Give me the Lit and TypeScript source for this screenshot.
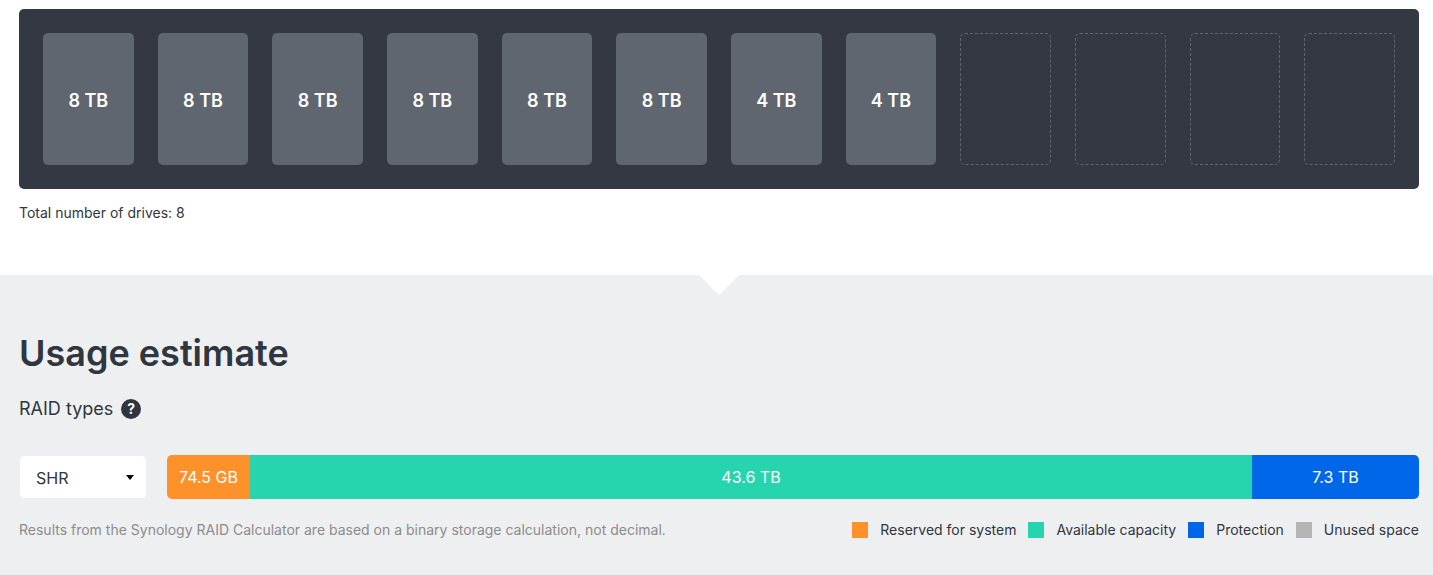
import { LitElement, html, css } from "lit";
import { customElement, state } from "lit/decorators.js";
import { classMap } from "lit/directives/class-map.js";
import { styleMap } from "lit/directives/style-map.js";

interface Segment {
  kind: string;
  label: string;
  share: number;
}

@customElement("drive-bay")
class DriveBay extends LitElement {
  static properties = { drives: { attribute: false }, slots: { type: Number } };

  declare drives: string[];
  declare slots: number;

  static styles = css`
    :host {
      display: block;
    }
    .bay {
      display: grid;
      grid-template-columns: repeat(12, minmax(0, 1fr));
      gap: 24px;
      margin: 0;
      padding: 24px;
      list-style: none;
      background: #343843;
      border-radius: 5px;
    }
    .slot {
      height: 132px;
      box-sizing: border-box;
      display: flex;
      align-items: center;
      justify-content: center;
      border-radius: 5px;
      color: #fff;
      font-size: 18px;
      line-height: 28px;
      font-weight: 600;
      border: 1px dashed #60666f;
    }
    .filled {
      border: 0;
      background: #60666f;
      padding-top: 4px;
    }
  `;

  render() {
    return html`<ul class="bay">
      ${Array.from({ length: this.slots }, (_, i) => this.drives[i]).map(
        (drive) =>
          html`<li class=${classMap({ slot: true, filled: !!drive })}>${drive ?? ""}</li>`
      )}
    </ul>`;
  }
}

@customElement("app-root")
class AppRoot extends LitElement {
  @state() private drives = ["8 TB", "8 TB", "8 TB", "8 TB", "8 TB", "8 TB", "4 TB", "4 TB"];

  @state() private segments: Segment[] = [
    { kind: "system", label: "74.5 GB", share: 83 },
    { kind: "available", label: "43.6 TB", share: 1002 },
    { kind: "protection", label: "7.3 TB", share: 167 },
  ];

  private legend = [
    { kind: "system", label: "Reserved for system" },
    { kind: "available", label: "Available capacity" },
    { kind: "protection", label: "Protection" },
    { kind: "unused", label: "Unused space" },
  ];

  static styles = css`
    :host {
      display: flex;
      flex-direction: column;
      min-height: 100vh;
      background: #fff;
      color: #2f3640;
      font-family: Inter, "Liberation Sans", sans-serif;
      font-size: 14px;
      line-height: 24px;
    }
    .drives {
      padding: 9px 14px 50px 19px;
    }
    .total {
      margin: 12px 0 0;
      line-height: 24px;
    }
    .usage {
      flex: 1;
      padding: 0 14px 32px 19px;
      background: #eeeff1;
    }
    .notch {
      display: block;
      width: 40px;
      height: 20px;
      margin: 0 auto;
      fill: #fff;
    }
    .title {
      margin: 32px 0 0;
      font-size: 36px;
      line-height: 52px;
      font-weight: 600;
    }
    .types {
      display: flex;
      align-items: center;
      gap: 8px;
      margin-top: 16px;
      font-size: 18px;
      line-height: 28px;
    }
    .help {
      display: block;
      width: 20px;
      height: 20px;
      padding: 0;
      border: 0;
      border-radius: 50%;
      background: #2f3640;
      color: #fff;
      font: 700 14px/20px Inter, sans-serif;
      text-align: center;
    }
    .estimate {
      display: flex;
      align-items: center;
      gap: 20px;
      margin-top: 32px;
    }
    .picker {
      display: grid;
      align-items: center;
      flex: none;
      width: 128px;
    }
    .select {
      grid-area: 1 / 1;
      appearance: none;
      box-sizing: border-box;
      width: 100%;
      height: 44px;
      margin: 0;
      padding: 2px 32px 0 16px;
      border: 1px solid #eeeff1;
      border-radius: 5px;
      background: #fff;
      color: inherit;
      font: 16px/24px Inter, sans-serif;
    }
    .caret {
      grid-area: 1 / 1;
      justify-self: end;
      width: 8px;
      height: 5px;
      margin-right: 13px;
      pointer-events: none;
    }
    .bar {
      display: flex;
      flex: 1;
      min-width: 0;
      overflow: hidden;
      border-radius: 5px;
      color: #fff;
      font-size: 16px;
      line-height: 44px;
      text-align: center;
    }
    .segment {
      flex-basis: 0;
      min-width: 0;
      white-space: nowrap;
    }
    .system {
      background: #ff912b;
    }
    .available {
      background: #26d5ad;
    }
    .protection {
      background: #0068e8;
    }
    .unused {
      background: #b4b4b4;
    }
    .foot {
      display: flex;
      flex-wrap: wrap;
      justify-content: space-between;
      gap: 8px 24px;
      margin-top: 19px;
    }
    .note {
      margin: 0;
      color: #8c8c8c;
    }
    .legend {
      display: flex;
      flex-wrap: wrap;
      gap: 12px;
      margin: 0;
      padding: 0;
      list-style: none;
    }
    .entry {
      display: flex;
      align-items: center;
      gap: 12px;
    }
    .swatch {
      width: 16px;
      height: 16px;
    }
  `;

  render() {
    return html`
      <section class="drives">
        <drive-bay .drives=${this.drives} .slots=${12}></drive-bay>
        <p class="total">Total number of drives: ${this.drives.length}</p>
      </section>
      <section class="usage">
        <svg class="notch" viewBox="0 0 40 20" aria-hidden="true"><path d="M0 0H40L20 20Z" /></svg>
        <h2 class="title">Usage estimate</h2>
        <div class="types">
          <label for="raid">RAID types</label>
          <button class="help" type="button">?</button>
        </div>
        <div class="estimate">
          <div class="picker">
            <select class="select" id="raid">
              <option selected>SHR</option>
            </select>
            <svg class="caret" viewBox="0 0 8 5" aria-hidden="true"><path d="M0 0H8L4 5Z" /></svg>
          </div>
          <div class="bar">
            ${this.segments.map(
              (s) => html`<div
                class=${classMap({ segment: true, [s.kind]: true })}
                style=${styleMap({ flexGrow: String(s.share) })}
              >${s.label}</div>`
            )}
          </div>
        </div>
        <div class="foot">
          <p class="note">
            Results from the Synology RAID Calculator are based on a binary storage calculation, not decimal.
          </p>
          <ul class="legend">
            ${this.legend.map(
              (l) => html`<li class="entry">
                <span class=${classMap({ swatch: true, [l.kind]: true })}></span>${l.label}
              </li>`
            )}
          </ul>
        </div>
      </section>
    `;
  }
}
